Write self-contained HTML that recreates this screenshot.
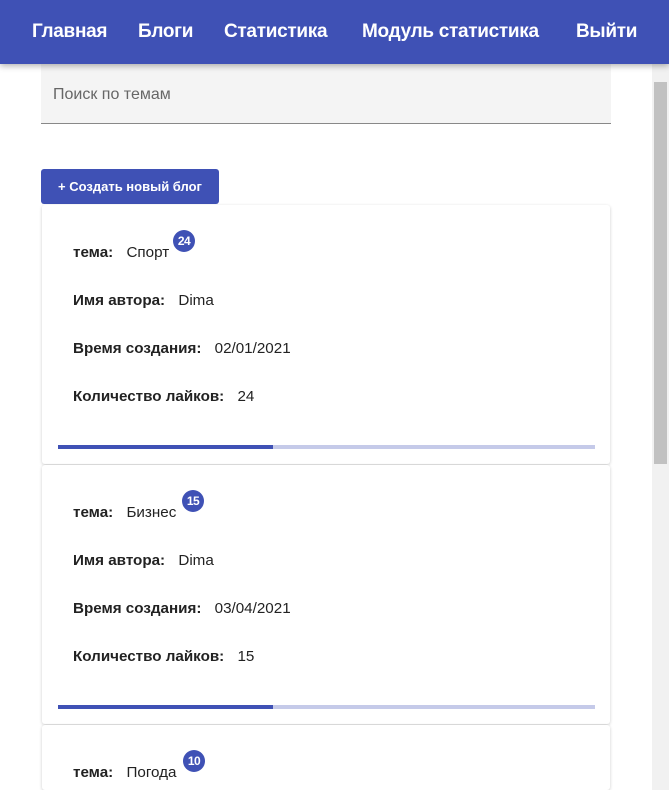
<!DOCTYPE html><html style="width:669px;height:790px;overflow:hidden"><head><meta charset="utf-8"><style>
body{margin:0;width:669px;height:790px;overflow:hidden;font-family:"Liberation Sans",sans-serif;background:#fff;position:relative}
.hdr{position:absolute;left:0;top:0;width:669px;height:64px;background:#3f51b5;box-shadow:0 2px 6px rgba(0,0,0,.3);z-index:2}
.hdr span{position:absolute;top:21px;color:#fff;font-weight:bold;font-size:19px;letter-spacing:-0.3px}
.sb{position:absolute;left:652px;top:64px;width:17px;height:726px;background:#f1f1f1}
.sb div{position:absolute;left:2px;top:18px;width:13px;height:382px;background:#c1c1c1}
.search{position:absolute;left:41px;top:64px;width:570px;height:59px;background:#f4f4f4;border-bottom:1px solid #888}
.search span{position:absolute;left:12px;top:22px;color:#666;font-size:16px}
.btn{position:absolute;left:41px;top:169px;width:178px;height:35px;background:#3f51b5;border-radius:3px;color:#fff;font-weight:bold;font-size:13px;line-height:35px;text-align:center}
.card{position:absolute;left:42px;width:568px;height:259px;background:#fff;box-shadow:0 1px 3px rgba(0,0,0,.2);border-radius:3px}
.row{position:absolute;left:31px;font-size:15.2px;color:#222}
.row b{margin-right:9px}
.badge{position:absolute;width:22px;height:22px;border-radius:50%;background:#3f51b5;color:#fff;font-size:12px;font-weight:bold;text-align:center;line-height:22px;letter-spacing:-0.5px}
.bar{position:absolute;left:16px;top:240px;width:537px;height:4px;background:#c5cae9}
.bar div{width:215px;height:4px;background:#3f51b5}
</style></head><body>
<div class="hdr"><span style="left:32px">Главная</span><span style="left:138px">Блоги</span><span style="left:224px">Статистика</span><span style="left:362px">Модуль статистика</span><span style="left:576px">Выйти</span></div>
<div class="search"><span>Поиск по темам</span></div>
<div class="btn">+ Создать новый блог</div>
<div class="card" style="top:205px">
<div class="row" style="top:39px"><b>тема:</b> Спорт</div><div class="badge" style="left:131px;top:25px">24</div>
<div class="row" style="top:87px"><b>Имя автора:</b> Dima</div>
<div class="row" style="top:135px"><b>Время создания:</b> 02/01/2021</div>
<div class="row" style="top:183px"><b>Количество лайков:</b> 24</div>
<div class="bar"><div></div></div></div>
<div class="card" style="top:465px">
<div class="row" style="top:39px"><b>тема:</b> Бизнес</div><div class="badge" style="left:140px;top:25px">15</div>
<div class="row" style="top:87px"><b>Имя автора:</b> Dima</div>
<div class="row" style="top:135px"><b>Время создания:</b> 03/04/2021</div>
<div class="row" style="top:183px"><b>Количество лайков:</b> 15</div>
<div class="bar"><div></div></div></div>
<div class="card" style="top:725px;height:65px">
<div class="row" style="top:39px"><b>тема:</b> Погода</div><div class="badge" style="left:141px;top:25px">10</div></div>
<div class="sb"><div></div></div>
</body></html>
